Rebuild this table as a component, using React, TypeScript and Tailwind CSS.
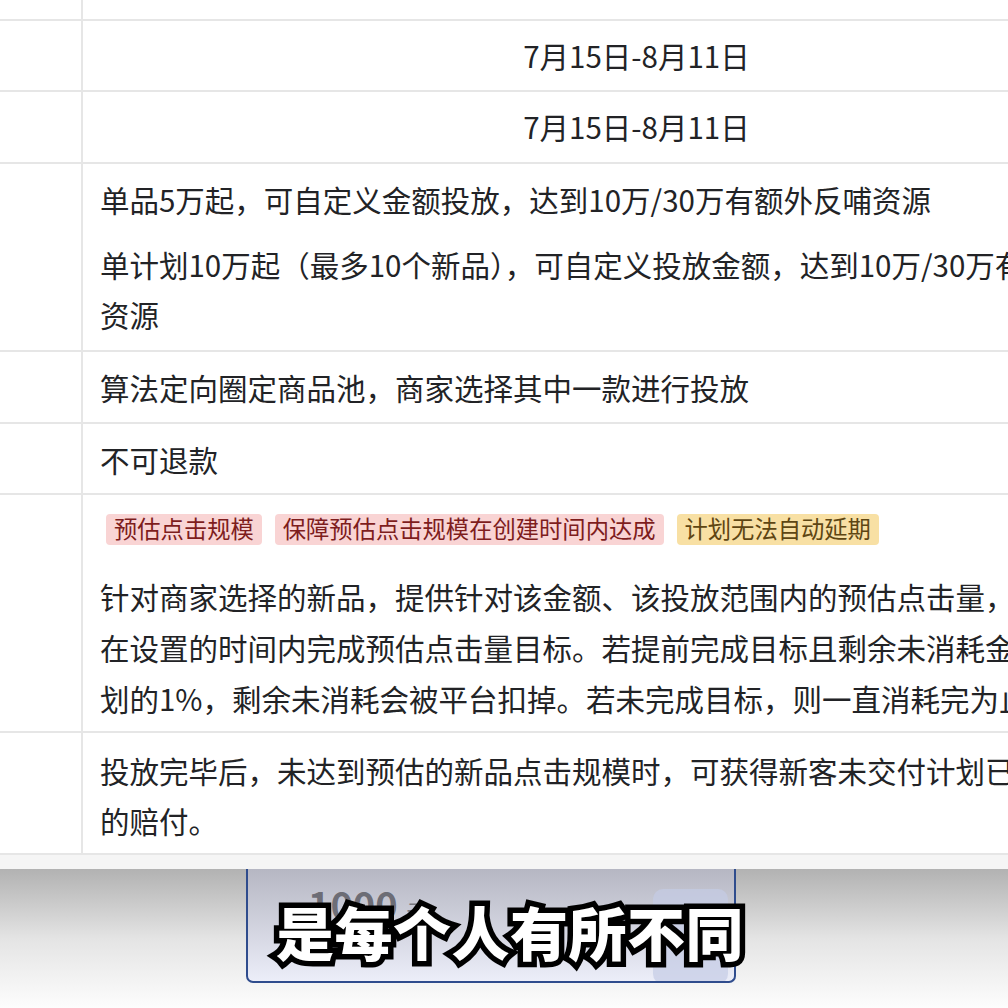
const font = { fontFamily: '"Noto Sans CJK SC", "Noto Sans", sans-serif' };

function Row({ children, className = '' }: { children?: React.ReactNode; className?: string }) {
  return (
    <div className="flex border-b-2 border-[#e6e6e6]">
      <div className="w-[83px] shrink-0 border-r-2 border-[#e6e6e6]" />
      <div className={`flex-1 px-[17px] ${className}`}>{children}</div>
    </div>
  );
}

function Tag({ children, tone }: { children: React.ReactNode; tone: 'red' | 'yellow' }) {
  const cls =
    tone === 'red' ? 'bg-[#f9d4d4] text-[#7e1d1d]' : 'bg-[#f8e0a4] text-[#5e4613]';
  return (
    <span className={`inline-flex h-[31px] items-center rounded-[4px] px-[8px] text-[23.3px] leading-none ${cls}`}>
      {children}
    </span>
  );
}

export default function App() {
  return (
    <div className="relative flex h-[1008px] w-[1008px] flex-col overflow-hidden bg-white text-[#222326]" style={font}>
      <div className="-mt-[52px] w-[1190px] text-[29.5px] leading-[50px]">
        <Row className="h-[71px] pt-[10px] text-center">7月15日-8月11日</Row>
        <Row className="pt-[9px] pb-[10px] text-center">7月15日-8月11日</Row>
        <Row className="pt-[9px] pb-[11px] text-center">7月15日-8月11日</Row>
        <Row className="pt-[10px] pb-[11px]">
          <p className="whitespace-nowrap">单品5万起，可自定义金额投放，达到10万/30万有额外反哺资源</p>
          <p className="mt-[15px] whitespace-nowrap">
            单计划10万起（最多10个新品），可自定义投放金额，达到10万/30万有额外反哺
            <br />
            资源
          </p>
        </Row>
        <Row className="pt-[10px] pb-[10px]">算法定向圈定商品池，商家选择其中一款进行投放</Row>
        <Row className="pt-[10px] pb-[9px]">不可退款</Row>
        <Row className="pt-[9px] pb-[7px]">
          <div className="flex h-[50px] items-center gap-[13px] pl-[6px]">
            <Tag tone="red">预估点击规模</Tag>
            <Tag tone="red">保障预估点击规模在创建时间内达成</Tag>
            <Tag tone="yellow">计划无法自动延期</Tag>
          </div>
          <p className="mt-[17px] whitespace-nowrap leading-[51px]">
            针对商家选择的新品，提供针对该金额、该投放范围内的预估点击量，算法会智能调控
            <br />
            在设置的时间内完成预估点击量目标。若提前完成目标且剩余未消耗金额小于计
            <br />
            划的1%，剩余未消耗会被平台扣掉。若未完成目标，则一直消耗完为止。
          </p>
        </Row>
        <Row className="pt-[12px] pb-[8px]">
          <p className="whitespace-nowrap">
            投放完毕后，未达到预估的新品点击规模时，可获得新客未交付计划已消耗金额
            <br />
            的赔付。
          </p>
        </Row>
      </div>

      <div className="h-[14px] shrink-0 bg-[#f5f5f5]" />

      <div className="flex-1 bg-gradient-to-b from-[#b2b2b2] via-[#e4e4e4] to-[#fdfdfd]">
        <div className="relative ml-[246px] h-[114px] w-[490px] overflow-hidden rounded-b-[7px] border-x-2 border-b-2 border-[#2f4c8d] bg-gradient-to-b from-[#b6b7c3] to-[#eceef9]">
          <div className="absolute left-[60px] top-[16px] text-[38px] font-bold leading-none text-[#55555d]/80">
            1000 <span className="text-[22px] font-normal text-[#77777f]">元</span>
          </div>
          <div className="absolute left-[405px] top-[20px] h-[95px] w-[75px] rounded-[10px] bg-[#c4cce6]/70" />
        </div>
      </div>

      <div className="absolute left-[276px] top-[894px] whitespace-nowrap text-[58px] font-black leading-[74px] tracking-[0.5px] text-white [paint-order:stroke_fill] [-webkit-text-stroke:11px_#000]">
        是每个人有所不同
      </div>
    </div>
  );
}
